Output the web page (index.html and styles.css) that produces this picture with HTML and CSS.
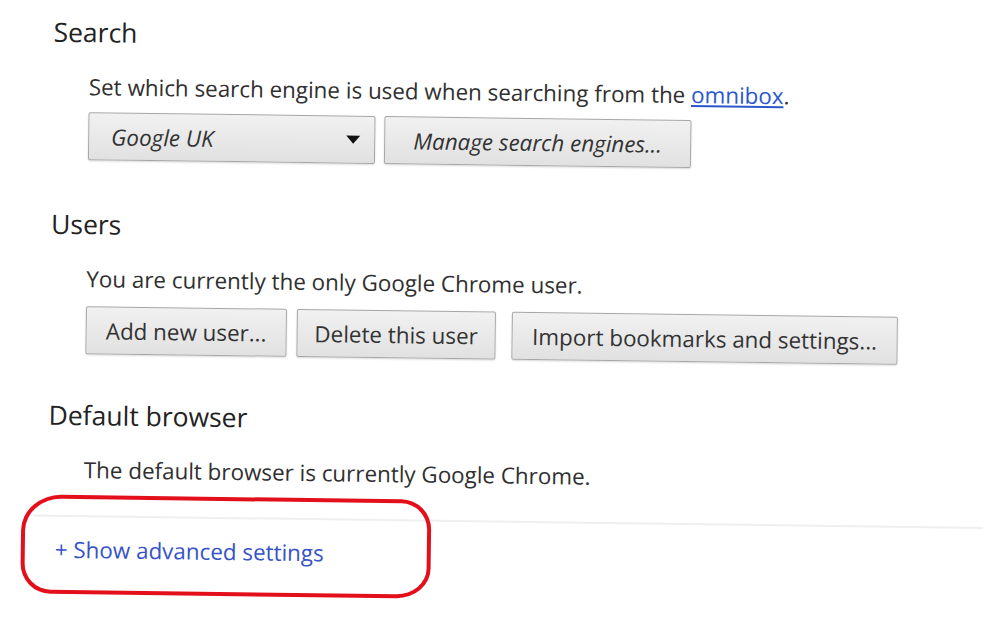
FILE: index.html
```html
<!DOCTYPE html>
<html>
  <head>
    <meta charset="utf-8" />
    <title>Settings</title>
    <link rel="stylesheet" href="styles.css">
  </head>

  <body>
    <div class="page">
      <section class="block">
        <h3>Search</h3>
        <div class="body">
          <p>Set which search engine is used when searching from the <a href="#">omnibox</a>.</p>
          <div class="controls">
            <div class="select">
              <span class="oblique">Google UK</span>
              <span class="arrow"></span>
            </div>
            <button class="btn manage"><span class="oblique">Manage search engines...</span></button>
          </div>
        </div>
      </section>

      <section class="block">
        <h3>Users</h3>
        <div class="body">
          <p>You are currently the only Google Chrome user.</p>
          <div class="controls users">
            <button class="btn add">Add new user...</button>
            <button class="btn delete">Delete this user</button>
            <button class="btn import">Import bookmarks and settings...</button>
          </div>
        </div>
      </section>

      <section class="block last">
        <h3>Default browser</h3>
        <div class="body">
          <p>The default browser is currently Google Chrome.</p>
        </div>
      </section>

      <div class="advanced">
        <a href="#">+ Show advanced settings</a>
        <!-- hand drawn red mark round the link -->
        <div class="mark"></div>
      </div>
    </div>
  </body>
</html>
```

FILE: styles.css
```css
body {
  margin: 0;
  background: #fff;
  font-family: "Open Sans", "Noto Sans", sans-serif;
  color: #303030;
  overflow: hidden;
}

.page {
  width: 1000px;
  transform: rotate(0.75deg);
  transform-origin: 0 0;
}

.block {
  padding-left: 54px;
}

h3 {
  margin: 0;
  padding-top: 15px;
  font-size: 26.5px;
  font-weight: normal;
  line-height: 32px;
  color: #222;
}

.block + .block h3 {
  padding-top: 48px;
}

.block.last h3 {
  padding-top: 45px;
}

.body {
  padding-left: 36px;
}

p {
  margin: 0;
  padding-top: 24px;
  font-size: 22.4px;
  line-height: 30px;
}

p a {
  color: #2a58cc;
}

.controls {
  display: flex;
  gap: 9px;
  margin-top: 10px;
}

.controls.users {
  gap: 10px;
  margin-top: 12px;
}

.select,
.btn {
  box-sizing: border-box;
  height: 48px;
  border: 1px solid #a6a6a6;
  border-radius: 2px;
  background: linear-gradient(#f1f1f1, #e1e1e1);
  box-shadow: 0 1px 2px rgba(0, 0, 0, 0.15);
  font-family: inherit;
  font-size: 22.4px;
  color: #333;
  padding: 0 10px;
}

.select {
  width: 287px;
  display: flex;
  align-items: center;
  justify-content: space-between;
  padding: 0 14px 0 22px;
}

.oblique {
  font-style: italic;
}

.arrow {
  width: 0;
  height: 0;
  border-left: 7px solid transparent;
  border-right: 7px solid transparent;
  border-top: 8px solid #111;
}

.manage {
  width: 307px;
}

.add {
  width: 201px;
}

.delete {
  width: 199px;
}

.import {
  width: 386px;
  margin-left: 6px;
}

.advanced {
  position: relative;
  margin: 30px 10px 0 40px;
  border-top: 2px solid #efefef;
  padding: 18px 0 40px 22px;
  font-size: 22.4px;
  line-height: 30px;
}

.advanced a {
  color: #3652c8;
  text-decoration: none;
}

.mark {
  position: absolute;
  left: -12px;
  top: -22px;
  width: 402px;
  height: 91px;
  border: 4px solid #e3101c;
  border-radius: 40px 30px 34px 30px / 36px 30px 30px 30px;
}
```
